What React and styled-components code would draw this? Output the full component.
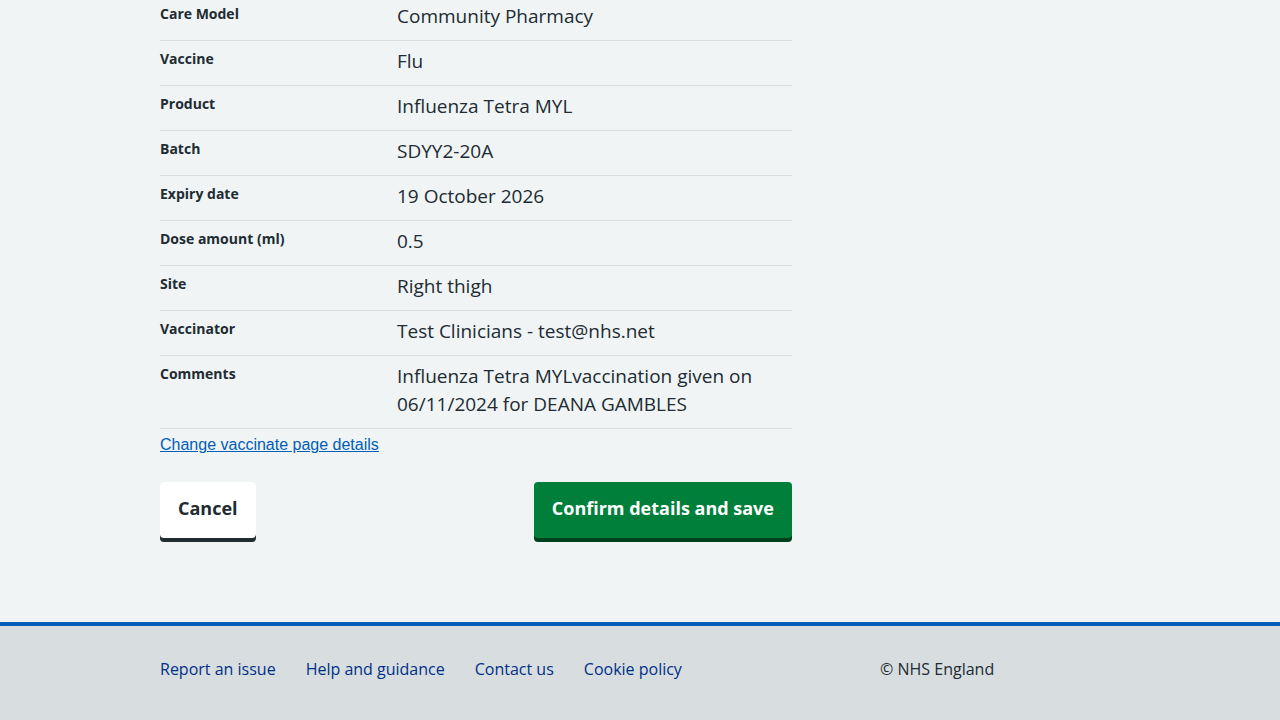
import React from "react";
import styled, { createGlobalStyle } from "styled-components";

const GlobalStyle = createGlobalStyle`
  html, body {
    margin: 0;
    padding: 0;
    background: #f0f4f5;
    font-family: "Open Sans", "Liberation Sans", sans-serif;
    color: #212b32;
  }
`;

const rows = [
  { key: "Care Model", value: "Community Pharmacy" },
  { key: "Vaccine", value: "Flu" },
  { key: "Product", value: "Influenza Tetra MYL" },
  { key: "Batch", value: "SDYY2-20A" },
  { key: "Expiry date", value: "19 October 2026" },
  { key: "Dose amount (ml)", value: "0.5" },
  { key: "Site", value: "Right thigh" },
  { key: "Vaccinator", value: "Test Clinicians - test@nhs.net" },
  {
    key: "Comments",
    value: "Influenza Tetra MYLvaccination given on 06/11/2024 for DEANA GAMBLES",
  },
];

const footerLinks = ["Report an issue", "Help and guidance", "Contact us", "Cookie policy"];

const App = () => {
  return (
    <Page>
      <GlobalStyle />
      <Main>
        <SummaryList>
          {rows.map((row) => (
            <Row key={row.key}>
              <Key>{row.key}</Key>
              <Value>{row.value}</Value>
            </Row>
          ))}
        </SummaryList>
        <ChangeLink href="#">Change vaccinate page details</ChangeLink>
        <ButtonRow>
          <Button>Cancel</Button>
          <Button primary>Confirm details and save</Button>
        </ButtonRow>
      </Main>
      <Footer>
        <FooterInner>
          <FooterLinks>
            {footerLinks.map((l) => (
              <FooterLink key={l} href="#">
                {l}
              </FooterLink>
            ))}
          </FooterLinks>
          <Copyright>© NHS England</Copyright>
        </FooterInner>
      </Footer>
    </Page>
  );
};

const Page = styled.div`
  min-height: 100vh;
  display: flex;
  flex-direction: column;
`;

const Main = styled.main`
  width: 632px;
  margin: -4px 0 0 160px;
  padding-bottom: 84px;
`;

const SummaryList = styled.dl`
  margin: 0;
`;

const Row = styled.div`
  display: grid;
  grid-template-columns: 237px 1fr;
  border-bottom: 1px solid #d8dde0;
  padding: 6px 0 10px;
`;

const Key = styled.dt`
  font-size: 14px;
  font-weight: 700;
  line-height: 24px;
`;

const Value = styled.dd`
  margin: 0;
  font-size: 19px;
  line-height: 28px;
`;

const ChangeLink = styled.a`
  display: inline-block;
  margin-top: 7px;
  font-family: "Liberation Sans", Arial, sans-serif;
  font-size: 16px;
  line-height: 18px;
  color: #005eb8;
  text-decoration: underline;
`;

const ButtonRow = styled.div`
  display: flex;
  justify-content: space-between;
  margin-top: 27px;
`;

const Button = styled.button`
  font-family: "Open Sans", "Liberation Sans", sans-serif;
  font-size: 18px;
  font-weight: 700;
  height: 56px;
  padding: 0 18px 4px;
  border: none;
  border-radius: 4px;
  background: ${(p) => (p.primary ? "#007f3b" : "#ffffff")};
  color: ${(p) => (p.primary ? "#ffffff" : "#212b32")};
  box-shadow: 0 4px 0 ${(p) => (p.primary ? "#00401e" : "#212b32")};
  cursor: pointer;
`;

const Footer = styled.footer`
  flex: 1;
  background: #d8dde0;
  border-top: 4px solid #005eb8;
`;

const FooterInner = styled.div`
  width: 960px;
  margin-left: 160px;
  display: grid;
  grid-template-columns: 720px 240px;
  padding-top: 31px;
`;

const FooterLinks = styled.div`
  display: flex;
  gap: 30px;
`;

const FooterLink = styled.a`
  font-size: 16px;
  line-height: 24px;
  color: #003087;
  text-decoration: none;
`;

const Copyright = styled.p`
  margin: 0;
  font-size: 16px;
  line-height: 24px;
  color: #212b32;
`;

export default App;
